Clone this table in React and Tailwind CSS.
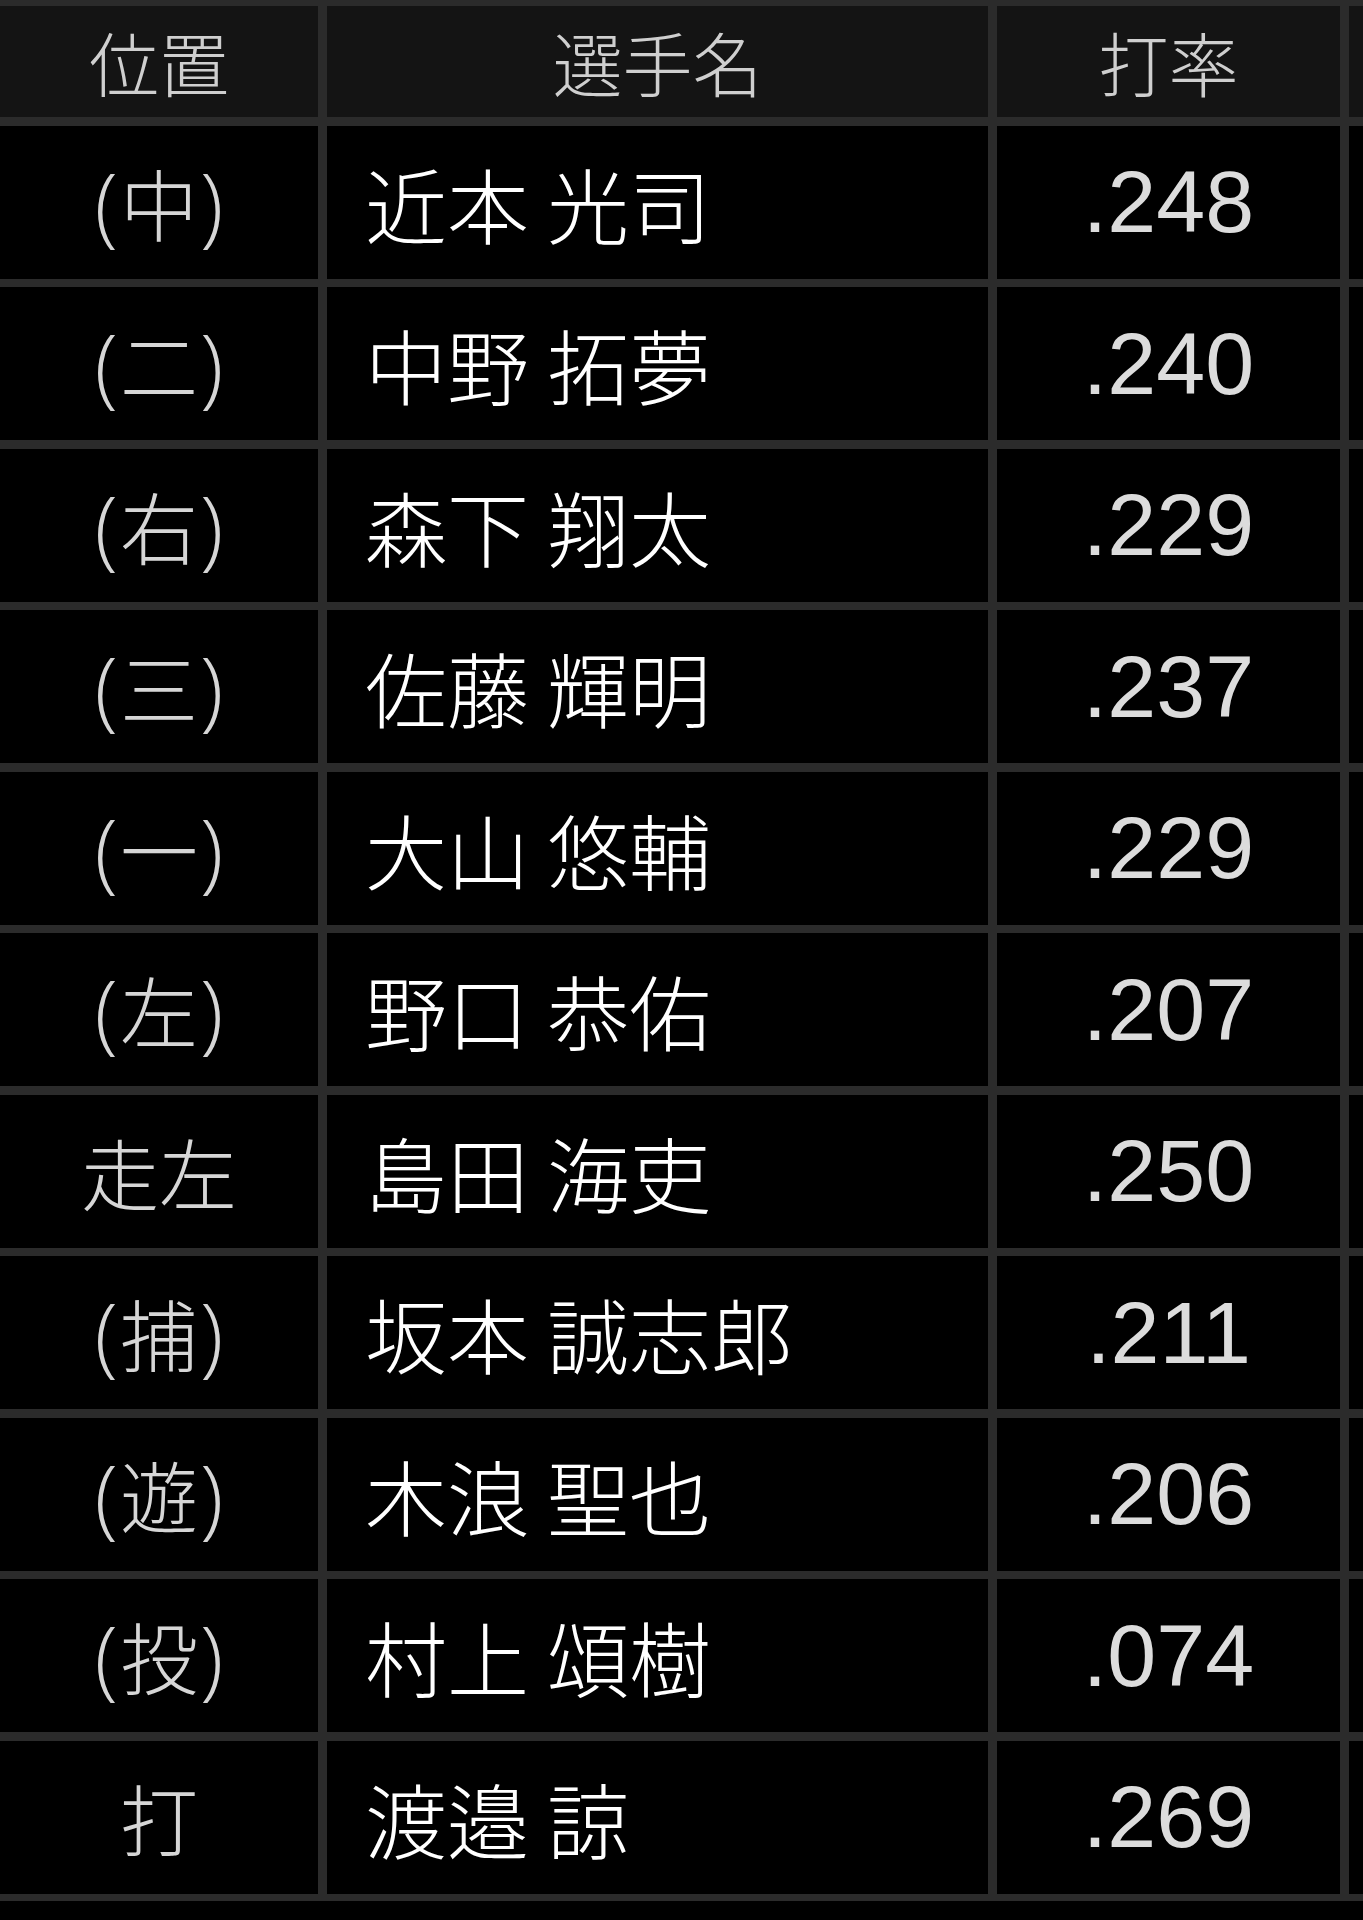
const rows = [
  { pos: '(中)', name: '近本 光司', avg: '.248' },
  { pos: '(二)', name: '中野 拓夢', avg: '.240' },
  { pos: '(右)', name: '森下 翔太', avg: '.229' },
  { pos: '(三)', name: '佐藤 輝明', avg: '.237' },
  { pos: '(一)', name: '大山 悠輔', avg: '.229' },
  { pos: '(左)', name: '野口 恭佑', avg: '.207' },
  { pos: '走左', name: '島田 海吏', avg: '.250' },
  { pos: '(捕)', name: '坂本 誠志郎', avg: '.211' },
  { pos: '(遊)', name: '木浪 聖也', avg: '.206' },
  { pos: '(投)', name: '村上 頌樹', avg: '.074' },
  { pos: '打', name: '渡邉 諒', avg: '.269' },
];

const jp = { fontFamily: '"Noto Sans CJK JP", "Noto Sans", sans-serif' };
const latin = { fontFamily: '"Open Sans", "Noto Sans", sans-serif' };
const num = { fontFamily: '"Liberation Sans", Arial, sans-serif' };

function Pos({ text }) {
  if (!text.startsWith('(')) return <span>{text}</span>;
  return (
    <span className="flex items-center">
      <span className="text-[86px] font-light" style={latin}>(</span>
      <span className="mx-[2px]">{text.slice(1, -1)}</span>
      <span className="text-[86px] font-light" style={latin}>)</span>
    </span>
  );
}

export default function App() {
  return (
    <div className="min-h-[1920px] w-[1363px] bg-black" style={jp}>
      <div className="bg-[#2b2b2b] pt-[6px] pb-[7px]">
        <div className="grid grid-cols-[318px_661px_343px_1fr] grid-rows-[111px_repeat(11,153px)] gap-x-[9px] gap-y-[8.5px]">
          {/* header */}
          <div className="bg-[#141414] flex items-center justify-center text-[70px] font-light text-[#cfcfcf]">位置</div>
          <div className="bg-[#141414] flex items-center justify-center text-[70px] font-light text-[#cfcfcf]">選手名</div>
          <div className="bg-[#141414] flex items-center justify-center text-[70px] font-light text-[#cfcfcf]">打率</div>
          <div className="bg-[#141414]"></div>

          {rows.map((r) => (
            <div key={r.name} className="contents">
              <div className="bg-black flex items-center justify-center text-[78px] font-light text-[#d6d6d6]">
                <Pos text={r.pos} />
              </div>
              <div className="bg-black flex items-center pl-[38px] text-[82px] font-light text-white whitespace-pre">{r.name}</div>
              <div className="bg-black flex items-center justify-center text-[88px] text-[#dcdcdc]" style={num}>{r.avg}</div>
              <div className="bg-black"></div>
            </div>
          ))}
        </div>
      </div>
    </div>
  );
}
